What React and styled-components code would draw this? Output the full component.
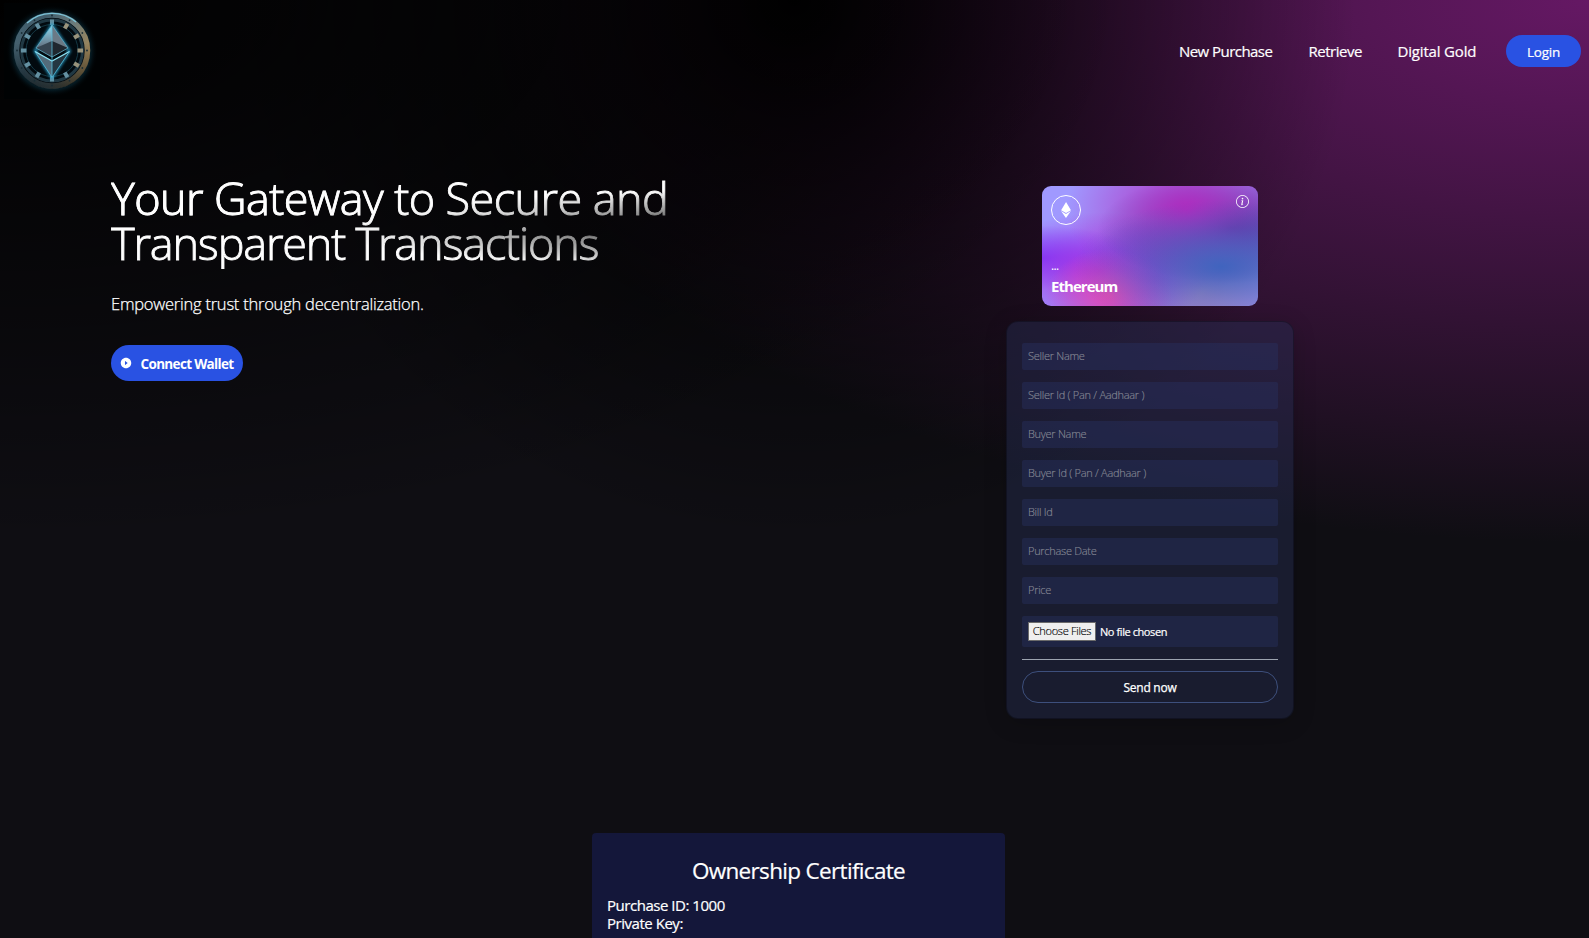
import React from "react";
import styled, { createGlobalStyle } from "styled-components";
import { SiEthereum } from "react-icons/si";
import { BsInfoCircle } from "react-icons/bs";
import { AiFillPlayCircle } from "react-icons/ai";

const Global = createGlobalStyle`
  * { box-sizing: border-box; }
  html, body { margin: 0; padding: 0; background: #0f0e13; overflow: hidden; }
  body { height: 938px; font-family: "Open Sans", "Noto Sans", sans-serif; color: #fff; }
  h1, h2, p { margin: 0; font-weight: inherit; }
`;

const Page = styled.div`
  height: 938px;
  overflow: hidden;
  background: #0f0e13;
`;

const Welcome = styled.div`
  height: 767px;
  background-color: #0f0e13;
  background-image:
    radial-gradient(at 0% 0%, #000 0, transparent 50%),
    radial-gradient(at 50% 0%, #000 0, transparent 50%),
    radial-gradient(at 100% 0%, #651864 0, transparent 50%);
`;

const Header = styled.header`
  display: flex;
  align-items: center;
  justify-content: space-between;
  height: 102px;
  padding: 0 8px 0 4px;
`;

const Logo = styled.svg`
  display: block;
  width: 96px;
  height: 96px;
`;

const Nav = styled.nav`
  display: flex;
  align-items: center;
`;

const NavLink = styled.a`
  width: ${(p) => p.$width}px;
  margin-right: ${(p) => p.$gap}px;
  font-size: 15px;
  line-height: 20px;
  letter-spacing: ${(p) => p.$spacing}px;
  white-space: nowrap;
  -webkit-text-stroke: 0.2px #fff;
`;

const LoginButton = styled.button`
  width: 75px;
  height: 32px;
  padding: 2px 0 0;
  border: 0;
  border-radius: 16px;
  background: #2952e3;
  color: #fff;
  font: 400 13.5px/20px "Open Sans", sans-serif;
  letter-spacing: -0.2px;
  -webkit-text-stroke: 0.2px #fff;
`;

const Hero = styled.main`
  display: flex;
  justify-content: space-between;
  padding: 69px 295px 0 111px;
`;

const Intro = styled.section`
  width: 740px;
`;

const Title = styled.h1`
  padding: 4px 0;
  font-size: 45px;
  line-height: 45px;
  font-weight: 300;
  color: transparent;
  -webkit-text-stroke: 0.9px transparent;
  background-color: #fff;
  background-image:
    radial-gradient(at 4% 36%, #fff 0, transparent 53%),
    radial-gradient(at 100% 60%, #000 0, transparent 50%);
  -webkit-background-clip: text;
  background-clip: text;
`;

const TitleLine = styled.span`
  letter-spacing: ${(p) => p.$spacing}px;
`;

const Tagline = styled.p`
  margin-top: 22px;
  font-size: 16.5px;
  line-height: 26px;
  font-weight: 300;
  letter-spacing: -0.23px;
  -webkit-text-stroke: 0.25px #fff;
`;

const ConnectButton = styled.button`
  display: flex;
  align-items: center;
  width: 132px;
  height: 36px;
  margin-top: 28px;
  padding: 0 0 0 9px;
  border: 0;
  border-radius: 18px;
  background: #2952e3;
  color: #fff;
  font: 700 13.5px/20px "Open Sans", sans-serif;
  letter-spacing: -0.66px;
  white-space: nowrap;

  svg { width: 12px; height: 12px; margin-right: 8.5px; }
  span { padding-top: 2px; }
`;

const Side = styled.section`
  display: flex;
  flex-direction: column;
  align-items: center;
  width: 288px;
  padding-top: 15px;
`;

const EthCard = styled.div`
  display: flex;
  flex-direction: column;
  justify-content: space-between;
  width: 216px;
  height: 120px;
  padding: 9px;
  border-radius: 9px;
  background-color: #a099ff;
  background-image:
    radial-gradient(at 83% 67%, #4064be 0, transparent 58%),
    radial-gradient(at 67% 20%, #b12abf 0, transparent 59%),
    radial-gradient(at 88% 35%, #34308c 0, transparent 50%),
    radial-gradient(at 31% 91%, #e24cb4 0, transparent 30%),
    radial-gradient(at 27% 71%, #a82ce0 0, transparent 49%),
    radial-gradient(at 74% 89%, #c090c0 0, transparent 45%),
    radial-gradient(at 0% 60%, #7040ff 0, transparent 32%),
    radial-gradient(at 53% 75%, #5a3ce0 0, transparent 45%);
`;

const CardTop = styled.div`
  display: flex;
  justify-content: space-between;
  align-items: flex-start;
`;

const CoinBadge = styled.div`
  display: flex;
  align-items: center;
  justify-content: center;
  width: 30px;
  height: 30px;
  border: 1px solid #fff;
  border-radius: 50%;
`;

const CardAddress = styled.p`
  font-size: 12px;
  line-height: 15px;
  font-weight: 400;
  letter-spacing: -0.7px;
`;

const CardName = styled.p`
  margin: 3px 0 1px;
  font-size: 15px;
  line-height: 20px;
  font-weight: 700;
  letter-spacing: -0.95px;
`;

const FormPanel = styled.form`
  display: flex;
  flex-direction: column;
  width: 288px;
  height: 398px;
  margin-top: 15px;
  padding: 21px 15px 0;
  border: 1px solid rgba(0, 0, 0, 0.3);
  border-radius: 12px;
  background: rgba(39, 51, 89, 0.4);
  box-shadow: 0 4px 22px rgba(0, 0, 0, 0.18);
`;

const Field = styled.input`
  flex: none;
  height: 27px;
  margin: 0 0 12px;
  padding: 0 6px 2px;
  border: 0;
  border-radius: 2px;
  outline: 0;
  background: rgba(39, 49, 96, 0.45);
  color: #fff;
  font: 300 11px/20px "Open Sans", sans-serif;
  letter-spacing: -0.28px;
  -webkit-text-stroke: 0.15px #858894;

  &::placeholder { color: #858894; opacity: 1; }
`;

const FileField = styled.label`
  display: flex;
  flex: none;
  align-items: center;
  height: 31px;
  padding: 0 6px;
  border-radius: 2px;
  background: rgba(39, 49, 96, 0.45);
  font-size: 11px;
  letter-spacing: -0.42px;
  line-height: 15px;
  white-space: nowrap;
  -webkit-text-stroke: 0.2px #fff;

  input { display: none; }
`;

const FileText = styled.span`
  padding-bottom: 1px;
`;

const FileButton = styled.span`
  width: 68px;
  height: 19px;
  margin-right: 4px;
  border: 1px solid #6b6b6b;
  background: #efefef;
  color: #000;
  font-size: 11px;
  font-weight: 300;
  line-height: 16px;
  letter-spacing: -0.3px;
  text-align: center;
  -webkit-text-stroke: 0.15px #000;
`;

const Divider = styled.div`
  flex: none;
  height: 1px;
  margin: 12px 0 11px;
  background: #9ca3af;
`;

const SendButton = styled.button`
  flex: none;
  height: 32px;
  padding: 2px 0 0;
  border: 1px solid #3d4f7c;
  border-radius: 16px;
  background: transparent;
  color: #fff;
  font: 400 12px/20px "Open Sans", sans-serif;
  letter-spacing: -0.25px;
  -webkit-text-stroke: 0.25px #fff;
`;

const Certificate = styled.section`
  width: 413px;
  height: 300px;
  margin: 66px 0 0 592px;
  padding: 23px 15px;
  border-radius: 4px;
  background: #14173a;
`;

const CertTitle = styled.h2`
  font-size: 22.5px;
  line-height: 30px;
  letter-spacing: -0.67px;
  text-align: center;
  -webkit-text-stroke: 0.2px #fff;
`;

const CertBody = styled.div`
  margin-top: 10px;
`;

const CertLine = styled.p`
  font-size: 15px;
  line-height: 18px;
  letter-spacing: -0.47px;
  -webkit-text-stroke: 0.2px #fff;
`;

const fields = [
  "Seller Name",
  "Seller Id ( Pan / Aadhaar )",
  "Buyer Name",
  "Buyer Id ( Pan / Aadhaar )",
  "Bill Id",
  "Purchase Date",
  "Price",
];

const links = [
  { label: "New Purchase", width: 94, gap: 35.5, spacing: -0.55 },
  { label: "Retrieve", width: 53, gap: 36, spacing: -0.48 },
  { label: "Digital Gold", width: 78, gap: 30.5, spacing: -0.17 },
];

function CoinLogo() {
  const marks = Array.from({ length: 12 }, (_, i) => i * 30);
  return (
    <Logo viewBox="4 3 96 96">
      <defs>
        <linearGradient id="ring" x1="0" y1="0.2" x2="1" y2="0.6">
          <stop offset="0" stopColor="#45616f" />
          <stop offset="0.3" stopColor="#405c6a" />
          <stop offset="0.65" stopColor="#687a7c" />
          <stop offset="1" stopColor="#a08657" />
        </linearGradient>
        <linearGradient id="shade" x1="0" y1="0" x2="0" y2="1">
          <stop offset="0.4" stopColor="#02080c" stopOpacity="0" />
          <stop offset="1" stopColor="#02080c" stopOpacity="0.65" />
        </linearGradient>
        <radialGradient id="halo">
          <stop offset="0.7" stopColor="#1b6a85" stopOpacity="0.6" />
          <stop offset="0.86" stopColor="#0b3444" stopOpacity="0.4" />
          <stop offset="1" stopColor="#000" stopOpacity="0" />
        </radialGradient>
        <linearGradient id="facet" x1="0" y1="0" x2="0" y2="1">
          <stop offset="0" stopColor="#8edcf4" />
          <stop offset="0.6" stopColor="#6a7f90" />
          <stop offset="1" stopColor="#333d49" />
        </linearGradient>
        <filter id="glow" x="-50%" y="-50%" width="200%" height="200%">
          <feGaussianBlur stdDeviation="1.6" />
        </filter>
      </defs>
      <rect x="4" y="3" width="96" height="96" fill="#000203" />
      <circle cx="52" cy="51" r="46" fill="url(#halo)" />
      <circle cx="52" cy="50.5" r="34" fill="#020a0f" />
      <circle cx="52" cy="50.5" r="35.5" fill="none" stroke="url(#ring)" strokeWidth="5.5" />
      <circle cx="52" cy="50.5" r="35.5" fill="none" stroke="url(#shade)" strokeWidth="6" />
      <path d="M27 23A37.5 37.5 0 0 1 76 22" fill="none" stroke="#7cc3d8" strokeWidth="1.3" />
      <circle cx="52" cy="50.5" r="30.5" fill="none" stroke="#203843" strokeWidth="3" />
      <circle cx="52" cy="50.5" r="26" fill="none" stroke="#184350" strokeWidth="0.8" />
      {marks.map((angle) => (
        <g key={angle} transform={`rotate(${angle} 52 50.5)`}>
          <rect x="50" y="19.5" width="4" height="5.5" fill={angle > 20 && angle < 150 ? "#98937c" : "#6490a1"} />
          <circle cx="52" cy="15.5" r="0.9" fill="#182c35" />
        </g>
      ))}
      <path d="M52 25 35 51 52 77.5 69.5 51Z" fill="none" stroke="#2399c5" strokeWidth="2.5" filter="url(#glow)" />
      <path d="M52 25 36 48 52 57Z" fill="url(#facet)" />
      <path d="M52 25 68 48 52 57Z" fill="#6b7a86" />
      <path d="M36 48 52 41 52 57Z" fill="#364451" />
      <path d="M68 48 52 41 52 57Z" fill="#20272f" />
      <path d="M52 25 36 48 52 57 68 48Z" fill="none" stroke="#62b4cf" strokeWidth="0.7" />
      <path d="M35 51.5 52 61 52 77.5Z" fill="#536b7a" />
      <path d="M69.5 51.5 52 61 52 77.5Z" fill="#243641" />
      <path d="M35 51.5 52 61 69.5 51.5" fill="none" stroke="#8de3f5" strokeWidth="1.3" />
      <path d="M35 51.5 52 77.5 69.5 51.5M52 25V77" fill="none" stroke="#58bdd9" strokeWidth="0.8" />
    </Logo>
  );
}

export default function App() {
  return (
    <Page>
      <Global />
      <Welcome>
        <Header>
          <CoinLogo />
          <Nav>
            {links.map((l) => (
              <NavLink key={l.label} $width={l.width} $gap={l.gap} $spacing={l.spacing}>
                {l.label}
              </NavLink>
            ))}
            <LoginButton>Login</LoginButton>
          </Nav>
        </Header>
        <Hero>
          <Intro>
            <Title>
              <TitleLine $spacing={-0.58}>Your Gateway to Secure and</TitleLine>
              <br />
              <TitleLine $spacing={-1.17}>Transparent Transactions</TitleLine>
            </Title>
            <Tagline>Empowering trust through decentralization.</Tagline>
            <ConnectButton>
              <AiFillPlayCircle />
              <span>Connect Wallet</span>
            </ConnectButton>
          </Intro>
          <Side>
            <EthCard>
              <CardTop>
                <CoinBadge>
                  <SiEthereum size={16} />
                </CoinBadge>
                <BsInfoCircle size={13} />
              </CardTop>
              <div>
                <CardAddress>...</CardAddress>
                <CardName>Ethereum</CardName>
              </div>
            </EthCard>
            <FormPanel>
              {fields.map((f) => (
                <Field key={f} placeholder={f} />
              ))}
              <FileField>
                <input type="file" multiple />
                <FileButton>Choose Files</FileButton>
                <FileText>No file chosen</FileText>
              </FileField>
              <Divider />
              <SendButton type="button">Send now</SendButton>
            </FormPanel>
          </Side>
        </Hero>
      </Welcome>
      <Certificate>
        <CertTitle>Ownership Certificate</CertTitle>
        <CertBody>
          <CertLine>Purchase ID: 1000</CertLine>
          <CertLine>Private Key:</CertLine>
        </CertBody>
      </Certificate>
    </Page>
  );
}
